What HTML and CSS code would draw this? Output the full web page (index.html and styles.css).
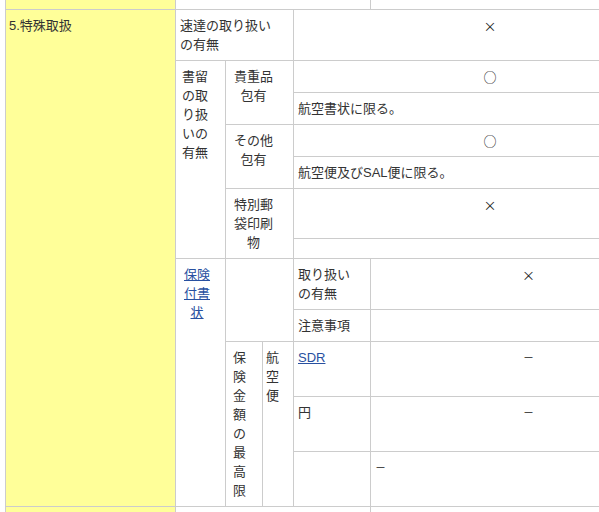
FILE: index.html
```html
<!DOCTYPE html>
<html lang="ja">
<head>
<meta charset="utf-8">
<title>特殊取扱</title>
<link rel="stylesheet" href="styles.css">
</head>
<body>
<table class="grid">
  <colgroup>
    <col class="c1">
    <col class="c2">
    <col class="c3">
    <col class="c4">
    <col class="c5">
    <col class="c6">
  </colgroup>
  <tr class="edge">
    <td class="cat"></td>
    <td colspan="4"></td>
    <td></td>
  </tr>
  <tr>
    <td class="cat" rowspan="12">5.特殊取扱</td>
    <td colspan="3">速達の取り扱い<br>の有無</td>
    <td colspan="2" class="mid"><span class="sym">×</span></td>
  </tr>
  <tr>
    <td rowspan="6" class="narrow">書留<br>の取<br>り扱<br>いの<br>有無</td>
    <td rowspan="2" colspan="2" class="sub">貴重品<br>包有</td>
    <td colspan="2" class="mid"><span class="sym">○</span></td>
  </tr>
  <tr>
    <td colspan="2">航空書状に限る。</td>
  </tr>
  <tr>
    <td rowspan="2" colspan="2" class="sub">その他<br>包有</td>
    <td colspan="2" class="mid"><span class="sym">○</span></td>
  </tr>
  <tr>
    <td colspan="2">航空便及びSAL便に限る。</td>
  </tr>
  <tr>
    <td rowspan="2" colspan="2" class="sub">特別郵<br>袋印刷<br>物</td>
    <td colspan="2" class="mid"><span class="sym">×</span></td>
  </tr>
  <tr>
    <td colspan="2"></td>
  </tr>
  <tr>
    <td rowspan="5" class="narrow center"><a href="#">保険<br>付書<br>状</a></td>
    <td colspan="2" rowspan="2"></td>
    <td>取り扱い<br>の有無</td>
    <td class="mid"><span class="sym">×</span></td>
  </tr>
  <tr>
    <td>注意事項</td>
    <td></td>
  </tr>
  <tr>
    <td rowspan="3" class="vert">保<br>険<br>金<br>額<br>の<br>最<br>高<br>限</td>
    <td rowspan="3" class="vert2">航<br>空<br>便</td>
    <td><a href="#">SDR</a></td>
    <td class="mid"><span class="sym small">－</span></td>
  </tr>
  <tr>
    <td>円</td>
    <td class="mid"><span class="sym small">－</span></td>
  </tr>
  <tr>
    <td></td>
    <td class="dash"><span class="sym small">－</span></td>
  </tr>
  <tr class="edge">
    <td class="cat"></td>
    <td colspan="4"></td>
    <td></td>
  </tr>
</table>
</body>
</html>
```
FILE: styles.css
```css
html, body {
  margin: 0;
  padding: 0;
  overflow: hidden;
  background: #ffffff;
}

body {
  font-family: "Liberation Sans", "Noto Sans CJK JP", sans-serif;
  font-size: 13px;
  line-height: 19px;
  color: #333333;
}

.grid {
  border-collapse: collapse;
  table-layout: fixed;
  width: 681px;
  margin: -30px 0 0 5px;
}

.c1 { width: 170px; }
.c2 { width: 50px; }
.c3 { width: 37px; }
.c4 { width: 31px; }
.c5 { width: 77px; }
.c6 { width: 316px; }

.grid td {
  border: 1px solid #cccccc;
  padding: 6px 4px;
  vertical-align: top;
  text-align: left;
  background: #ffffff;
}

.grid td.cat {
  background: #ffff99;
  padding-left: 3px;
}

.grid tr.edge td {
  height: 26px;
  padding: 6px 4px;
}

.grid td.mid {
  text-align: center;
}

.sym {
  font-family: "Noto Sans CJK JP", sans-serif;
  font-size: 13px;
  line-height: 19px;
  vertical-align: top;
  color: #222222;
}

.sym.small {
  font-size: 11px;
}

.grid td.narrow {
  padding-left: 6px;
  padding-right: 13px;
}

.grid td.center {
  text-align: center;
}

.grid td.sub {
  text-align: center;
  padding-left: 4px;
  padding-right: 16px;
}

.grid td.vert {
  padding-left: 7px;
}

.grid td.vert2 {
  padding-left: 3px;
}

.grid td.dash {
  padding-left: 4px;
}

a {
  color: #2850a0;
  text-decoration: underline;
}
```
